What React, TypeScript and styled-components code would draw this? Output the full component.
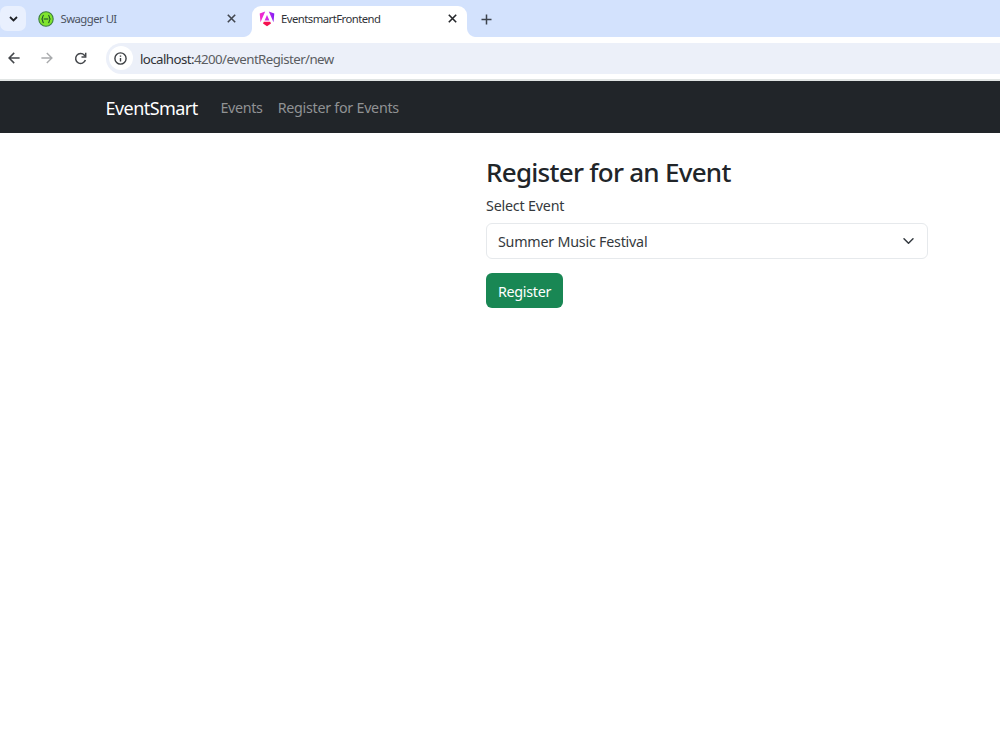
import React from "react";
import styled, { createGlobalStyle } from "styled-components";

const Global = createGlobalStyle`
  *, *::before, *::after { box-sizing: border-box; }
  body {
    margin: 0;
    background: #fff;
    color: #212529;
    font-family: "Noto Sans", "Open Sans", sans-serif;
    overflow: hidden;
  }
`;

const Label = styled.span<{ $size: number; $spacing?: number; $weight?: number; $shift?: number }>`
  font-size: ${(p) => p.$size}px;
  letter-spacing: ${(p) => p.$spacing ?? 0}px;
  font-weight: ${(p) => p.$weight ?? 400};
  padding-top: ${(p) => p.$shift ?? 0}px;
  white-space: nowrap;
`;

const Window = styled.div`
  display: flex;
  flex-direction: column;
  width: 1000px;
  height: 751px;
`;

const TabStrip = styled.div`
  display: flex;
  align-items: flex-end;
  height: 37px;
  flex: none;
  background: #d3e2fd;
`;

const TabSearch = styled.button`
  display: flex;
  align-items: center;
  justify-content: center;
  width: 26px;
  height: 25px;
  margin: 0 0 6px;
  padding: 0;
  border: 0;
  border-radius: 7px;
  background: #e9f0fe;
`;

const Tab = styled.div<{ $active?: boolean }>`
  position: relative;
  display: flex;
  align-items: center;
  flex: none;
  width: ${(p) => (p.$active ? 215 : 226)}px;
  height: 31.5px;
  padding: ${(p) => (p.$active ? "0 8px 5px 6.5px" : "0 14px 5px 12px")};
  border-radius: 9px 9px 0 0;
  background: ${(p) => (p.$active ? "#fff" : "transparent")};
  color: ${(p) => (p.$active ? "#303338" : "#4b5361")};

  &::before, &::after {
    content: ${(p) => (p.$active ? '""' : "none")};
    position: absolute;
    bottom: 0;
    width: 9px;
    height: 9px;
  }
  &::before {
    left: -9px;
    background: radial-gradient(circle at 0 0, transparent 8.5px, #fff 9.5px);
  }
  &::after {
    right: -9px;
    background: radial-gradient(circle at 100% 0, transparent 8.5px, #fff 9.5px);
  }
`;

const Favicon = styled.svg`
  flex: none;
  width: 16px;
  height: 16px;
  margin-right: 6.5px;
`;

const TabClose = styled.button`
  display: flex;
  align-items: center;
  justify-content: center;
  width: 14px;
  height: 14px;
  margin-left: auto;
  padding: 0;
  border: 0;
  background: transparent;
`;

const NewTab = styled(TabClose)`
  margin: 0 0 11px 12px;
`;

const Toolbar = styled.div`
  display: flex;
  align-items: center;
  flex: none;
  height: 44px;
  padding-left: 6px;
  border-bottom: 2px solid #e1e5e4;
  background: #fff;
`;

const ToolButton = styled.button`
  display: flex;
  align-items: center;
  justify-content: center;
  width: 16px;
  height: 16px;
  margin-right: 17.3px;
  padding: 0;
  border: 0;
  background: transparent;
`;

const AddressBar = styled.div`
  display: flex;
  align-items: center;
  flex: 1;
  height: 31px;
  padding-left: 3px;
  border-radius: 16px 0 0 16px;
  background: #ecf0f9;
  color: #5a5d61;
`;

const SiteInfo = styled.span`
  display: flex;
  align-items: center;
  justify-content: center;
  width: 24px;
  height: 24px;
  margin-right: 7px;
  border-radius: 50%;
  background: #fff;
`;

const Host = styled.span`
  color: #303236;
`;

const NavBar = styled.nav`
  display: flex;
  align-items: center;
  flex: none;
  height: 52px;
  padding-left: 105.5px;
  background: #212529;
`;

const Brand = styled.a`
  display: flex;
  width: 115px;
  color: #fff;
`;

const NavLink = styled.a`
  display: flex;
  margin-right: 15px;
  color: #909294;
`;

const Form = styled.form`
  display: flex;
  flex-direction: column;
  align-items: flex-start;
  width: 442px;
  margin: 22px 0 0 486px;
`;

const Title = styled.h2`
  display: flex;
  margin: 0;
  height: 34px;
  line-height: 34px;
`;

const FieldLabel = styled.label`
  display: flex;
  height: 24px;
  margin: 5px 0;
  line-height: 24px;
  color: #35393d;
`;

const Select = styled.div`
  display: flex;
  align-items: center;
  justify-content: space-between;
  width: 100%;
  height: 36px;
  padding: 0 12px 0 11px;
  border: 1px solid #e6e9ec;
  border-radius: 6px;
  color: #35393d;
`;

const Submit = styled.button`
  display: flex;
  align-items: center;
  justify-content: center;
  width: 77px;
  height: 35px;
  margin-top: 14px;
  padding: 0;
  border: 0;
  border-radius: 6px;
  background: #198754;
  color: #fff;
  font-family: inherit;
`;

const Cross = ({ color }: { color: string }) => (
  <svg width="9" height="9" viewBox="0 0 9 9" stroke={color} strokeWidth="1.6">
    <path d="M.8 .8 8.2 8.2M8.2 .8 .8 8.2" />
  </svg>
);

const SwaggerIcon = () => (
  <Favicon viewBox="0 0 16 16">
    <circle cx="8" cy="8" r="7.2" fill="#7fe52d" stroke="#3c7f3f" strokeWidth="1.1" />
    <g fill="none" stroke="#1f4f2a" strokeWidth="1.1">
      <path d="M5.8 4.2C4.3 4.2 5.2 7.6 3.6 8 5.2 8.4 4.3 11.8 5.8 11.8M10.2 4.2C11.7 4.2 10.8 7.6 12.4 8 10.8 8.4 11.7 11.8 10.2 11.8" />
      <path d="M5.7 8h4.6" />
    </g>
  </Favicon>
);

const AngularIcon = () => (
  <Favicon viewBox="0 0 16 16">
    <defs>
      <linearGradient id="ng" x1="0" y1="0.2" x2="1" y2="0.1">
        <stop offset="0" stopColor="#f82ac8" />
        <stop offset=".5" stopColor="#d22be8" />
        <stop offset="1" stopColor="#7b1cf5" />
      </linearGradient>
    </defs>
    <path
      fill="url(#ng)"
      d="M6.2 .6 .7 2.6 1.5 11.2zM9.8 .6 15.3 2.6 14.5 11.2zM8 4 10.4 9.4H5.6z"
    />
    <path fill="#f5104f" d="M4.8 10.7h6.4l.8 1.8L8 15.2 4 12.5z" />
  </Favicon>
);

export default function App() {
  return (
    <>
      <Global />
      <Window>
        <TabStrip>
          <TabSearch aria-label="Search tabs">
            <svg width="9" height="6" viewBox="0 0 9 6" fill="none" stroke="#202226" strokeWidth="1.8">
              <path d="M1 1l3.5 3.4L8 1" />
            </svg>
          </TabSearch>
          <Tab>
            <SwaggerIcon />
            <Label $size={11.3} $spacing={-0.52}>Swagger UI</Label>
            <TabClose aria-label="Close tab"><Cross color="#41464f" /></TabClose>
          </Tab>
          <Tab $active>
            <AngularIcon />
            <Label $size={11.3} $spacing={-0.53}>EventsmartFrontend</Label>
            <TabClose aria-label="Close tab"><Cross color="#24262a" /></TabClose>
          </Tab>
          <NewTab aria-label="New tab">
            <svg width="11" height="11" viewBox="0 0 11 11" stroke="#3d434d" strokeWidth="1.5">
              <path d="M5.5 .5v10M.5 5.5h10" />
            </svg>
          </NewTab>
        </TabStrip>
        <Toolbar>
          <ToolButton aria-label="Back">
            <svg width="12" height="12" viewBox="0 0 12 12" fill="none" stroke="#44474b" strokeWidth="1.5">
              <path d="M11.6 6H1.2M6.2 .9 1.1 6l5.1 5.1" />
            </svg>
          </ToolButton>
          <ToolButton aria-label="Forward">
            <svg width="12" height="12" viewBox="0 0 12 12" fill="none" stroke="#a9abad" strokeWidth="1.4">
              <path d="M.4 6h10.4M5.8 .9 10.9 6l-5.1 5.1" />
            </svg>
          </ToolButton>
          <ToolButton aria-label="Reload">
            <svg width="13" height="13" viewBox="0 0 13 13" fill="none" stroke="#44474b" strokeWidth="1.5">
              <path d="M11.4 8.1A5 5 0 1 1 10.4 3.2L11.4 4.3" />
              <path d="M11.7 .7v4.2H7.5" />
            </svg>
          </ToolButton>
          <AddressBar>
            <SiteInfo>
              <svg width="13" height="13" viewBox="0 0 13 13" fill="none" stroke="#3c3f43" strokeWidth="1.4">
                <circle cx="6.5" cy="6.5" r="5.6" />
                <path d="M6.5 5.9v3.5M6.5 3.4v1.4" />
              </svg>
            </SiteInfo>
            <Label $size={13.3} $spacing={-0.57} $shift={1.5}><Host>localhost:</Host>4200/eventRegister/new</Label>
          </AddressBar>
        </Toolbar>
        <NavBar>
          <Brand><Label $size={18} $spacing={-0.55} $shift={1}>EventSmart</Label></Brand>
          <NavLink><Label $size={14.3} $spacing={-0.33}>Events</Label></NavLink>
          <NavLink><Label $size={14.3} $spacing={-0.27}>Register for Events</Label></NavLink>
        </NavBar>
        <Form>
          <Title><Label $size={26} $spacing={-0.73} $weight={500}>Register for an Event</Label></Title>
          <FieldLabel><Label $size={14.3} $spacing={-0.2}>Select Event</Label></FieldLabel>
          <Select role="combobox">
            <Label $size={14.3} $spacing={-0.23} $shift={1}>Summer Music Festival</Label>
            <svg width="13" height="9" viewBox="0 0 13 9" fill="none" stroke="#343a40" strokeWidth="1.5" strokeLinecap="round" strokeLinejoin="round">
              <path d="M2 1.7l4.5 4.5L11 1.7" />
            </svg>
          </Select>
          <Submit type="button"><Label $size={14.3} $spacing={-0.3} $shift={2}>Register</Label></Submit>
        </Form>
      </Window>
    </>
  );
}
